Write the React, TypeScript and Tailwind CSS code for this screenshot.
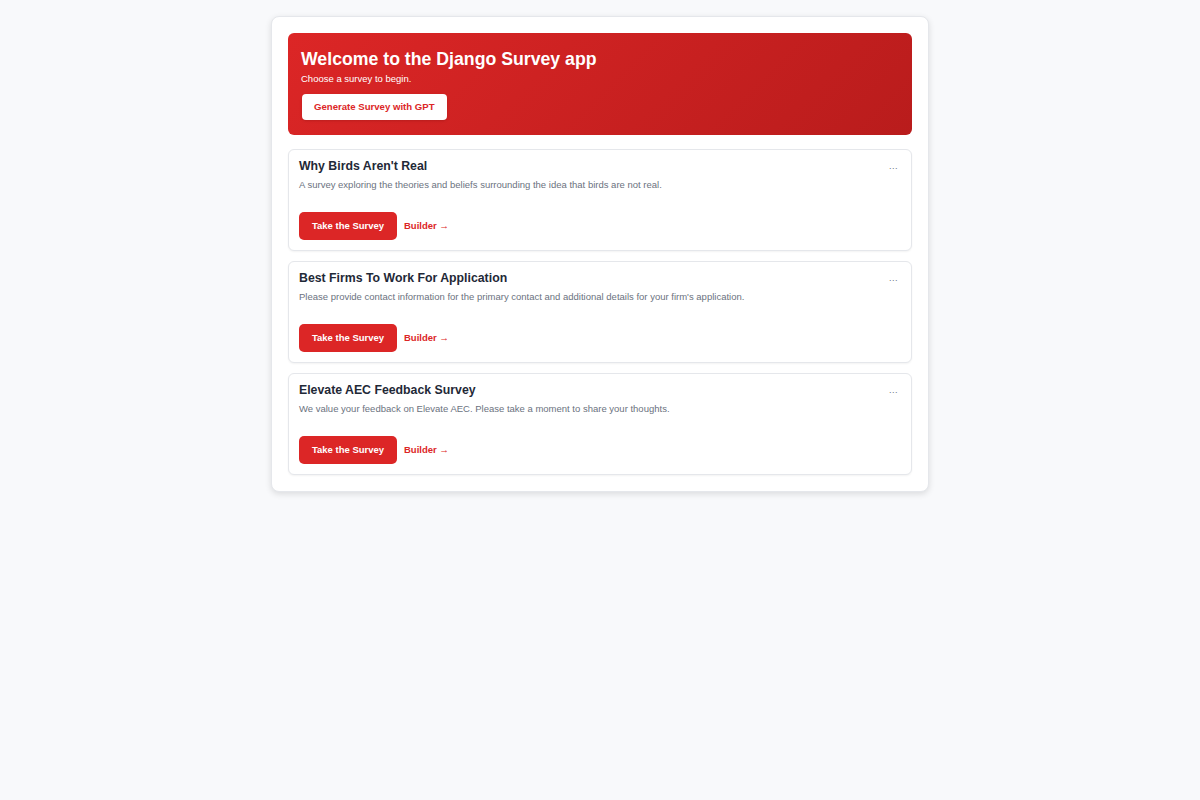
const surveys = [
  {
    title: "Why Birds Aren't Real",
    description:
      "A survey exploring the theories and beliefs surrounding the idea that birds are not real.",
  },
  {
    title: "Best Firms To Work For Application",
    description:
      "Please provide contact information for the primary contact and additional details for your firm's application.",
  },
  {
    title: "Elevate AEC Feedback Survey",
    description:
      "We value your feedback on Elevate AEC. Please take a moment to share your thoughts.",
  },
];

export default function App() {
  return (
    <div className="min-h-screen bg-[#f8f9fb] pt-4 font-['Liberation_Sans',Arial,sans-serif]">
      <div className="mx-auto w-[658px] rounded-lg border border-[#e5e7eb] bg-white p-4 shadow-[0_2px_6px_rgba(0,0,0,0.12)]">
        {/* Header */}
        <div className="mb-3.5 flex flex-col items-start rounded-md bg-[linear-gradient(135deg,#dc2626,#b91c1c)] px-[13px] pt-[14px] pb-[15px] text-white">
          <h1 className="text-[17.7px] font-bold leading-[24px]">
            Welcome to the Django Survey app
          </h1>
          <p className="mt-[2px] text-[9.5px] leading-[12px]">Choose a survey to begin.</p>
          <button className="mt-[9px] ml-px h-[26px] rounded bg-white px-3 text-[9.6px] font-bold text-[#dc2626] shadow-sm">
            Generate Survey with GPT
          </button>
        </div>

        {/* Survey list */}
        <div className="flex flex-col gap-2.5">
          {surveys.map((s) => (
            <div
              key={s.title}
              className="rounded-md border border-[#e5e7eb] bg-white px-[10px] pt-[8px] pb-[10px] shadow-[0_1px_2px_rgba(0,0,0,0.05)]"
            >
              <div className="flex h-4 items-start justify-between">
                <h2 className="text-[12.3px] font-bold leading-[16px] text-[#1f2937]">
                  {s.title}
                </h2>
                <span className="mt-[2px] mr-[3px] text-[9px] leading-[12px] tracking-[0.5px] text-[#6b7280]">...</span>
              </div>
              <p className="mt-[5px] text-[9.5px] leading-[12px] text-[#6b7280]">{s.description}</p>
              <div className="mt-[21px] flex h-7 items-center gap-[7px]">
                <button className="h-[28px] w-[98px] rounded-[5px] bg-[#dc2626] text-[9.5px] font-bold text-white">
                  Take the Survey
                </button>
                <a className="text-[9.5px] font-bold text-[#dc2626]">Builder →</a>
              </div>
            </div>
          ))}
        </div>
      </div>
    </div>
  );
}
